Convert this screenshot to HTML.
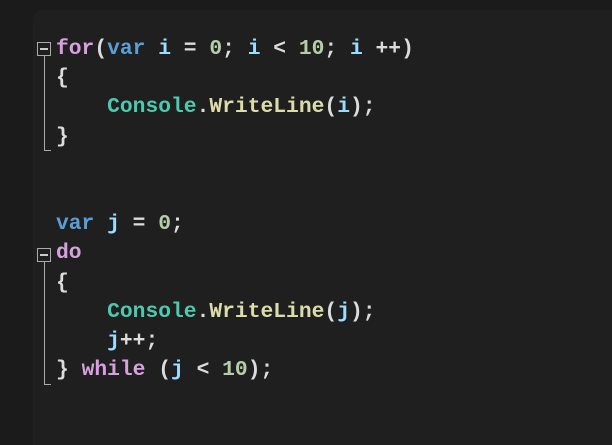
<html><head><style>
html,body{margin:0;width:612px;height:445px;overflow:hidden}
body{background:#1b1b1b;position:relative}
.p{position:absolute;left:33px;top:10px;width:579px;height:435px;background:#1f1f1f;border-radius:10px 0 0 0}
.c{position:absolute;left:56px;top:35px;font-family:"Liberation Mono",monospace;font-size:21.3px;font-weight:bold;line-height:29.2px;color:#dcdcdc;white-space:pre}
.k{color:#d8a0df}.b{color:#5a9ed8}.v{color:#9cdcfe}.n{color:#b5cea8}.t{color:#4ec9b0}.m{color:#dcdcaa}
.box{position:absolute;width:12px;height:12px;border:1px solid #aaa;}
.box:after{content:"";position:absolute;left:2px;right:2px;top:5px;height:2px;background:#ccc}
.ln{position:absolute;border-left:1px solid #aaa;border-bottom:1px solid #aaa;width:6px}
</style></head><body>
<div class="p"></div>
<div class="box" style="left:37px;top:42px"></div>
<div class="ln" style="left:44px;top:56px;height:94px"></div>
<div class="box" style="left:37px;top:248px"></div>
<div class="ln" style="left:44px;top:262px;height:122px"></div>
<div class="c"><span class="k">for</span>(<span class="b">var</span> <span class="v">i</span> = <span class="n">0</span>; <span class="v">i</span> &lt; <span class="n">10</span>; <span class="v">i</span> ++)
{
    <span class="t">Console</span>.<span class="m">WriteLine</span>(<span class="v">i</span>);
}


<span class="b">var</span> <span class="v">j</span> = <span class="n">0</span>;
<span class="k">do</span>
{
    <span class="t">Console</span>.<span class="m">WriteLine</span>(<span class="v">j</span>);
    <span class="v">j</span>++;
} <span class="k">while</span> (<span class="v">j</span> &lt; <span class="n">10</span>);</div>
</body></html>
